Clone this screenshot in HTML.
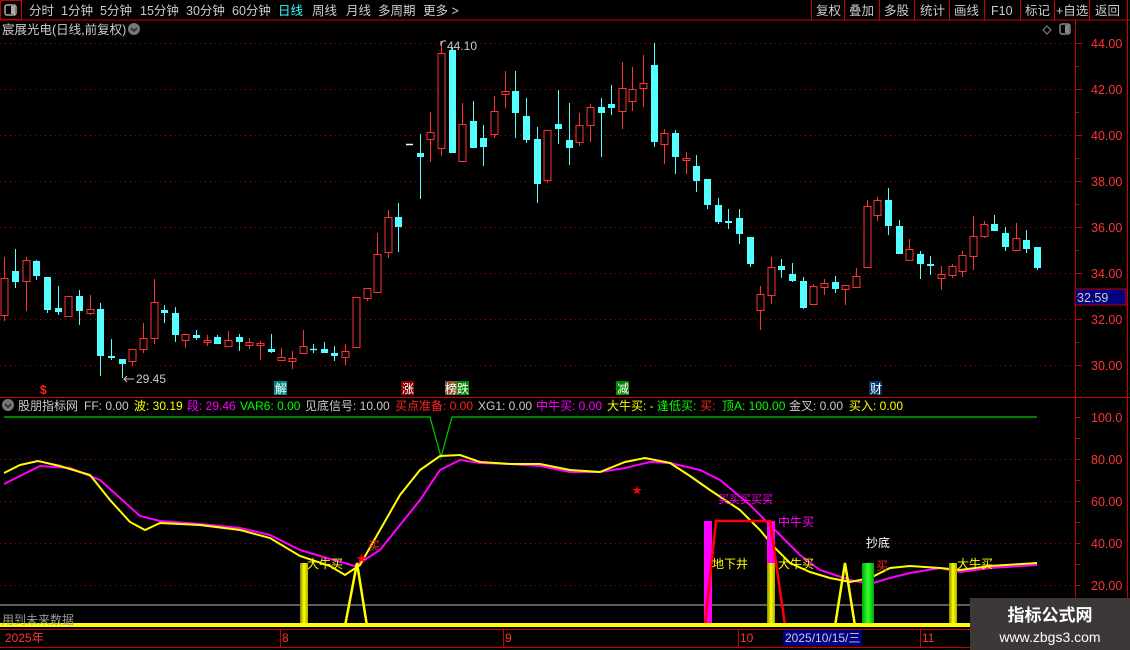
<!DOCTYPE html>
<html><head><meta charset="utf-8"><style>
body{margin:0;background:#000;width:1130px;height:650px;overflow:hidden;font-family:"Liberation Sans","Noto Sans CJK SC",sans-serif;}
svg{position:absolute;left:0;top:0}
text{font-family:"Liberation Sans","Noto Sans CJK SC",sans-serif;}
</style></head><body>
<svg id="s" width="1130" height="650" xmlns="http://www.w3.org/2000/svg">
<defs><linearGradient id="yg" x1="0" x2="1" y1="0" y2="0"><stop offset="0" stop-color="#880"/><stop offset="0.5" stop-color="#ff0"/><stop offset="1" stop-color="#aa0"/></linearGradient>
<linearGradient id="gg" x1="0" x2="1" y1="0" y2="0"><stop offset="0" stop-color="#0a0"/><stop offset="0.5" stop-color="#3f3"/><stop offset="1" stop-color="#0a0"/></linearGradient></defs>
<!-- toolbar -->
<rect x="0.5" y="0.5" width="21" height="19" fill="none" stroke="#c00"/>
<rect x="5" y="5" width="11" height="10" rx="2" fill="none" stroke="#aaa" stroke-width="1.5"/>
<rect x="11" y="6" width="4" height="8" fill="#aaa"/>
<line x1="0" y1="20" x2="1130" y2="20" stroke="#c00"/>
<g font-size="12.5" fill="#ccc">
<text x="29" y="15">分时</text><text x="61" y="15">1分钟</text><text x="100" y="15">5分钟</text><text x="140" y="15">15分钟</text><text x="186" y="15">30分钟</text><text x="232" y="15">60分钟</text><text x="278" y="15" fill="#3ff">日线</text><text x="312" y="15">周线</text><text x="346" y="15">月线</text><text x="378" y="15">多周期</text><text x="423" y="15">更多 &gt;</text>
<text x="816" y="15">复权</text><text x="849" y="15">叠加</text><text x="884" y="15">多股</text><text x="920" y="15">统计</text><text x="954" y="15">画线</text><text x="991" y="15">F10</text><text x="1025" y="15">标记</text><text x="1056" y="15">+自选</text><text x="1095" y="15">返回</text>
</g>
<g stroke="#c00"><line x1="811.5" y1="0" x2="811.5" y2="20"/><line x1="844.5" y1="0" x2="844.5" y2="20"/><line x1="879.5" y1="0" x2="879.5" y2="20"/><line x1="914.5" y1="0" x2="914.5" y2="20"/><line x1="949.5" y1="0" x2="949.5" y2="20"/><line x1="984.5" y1="0" x2="984.5" y2="20"/><line x1="1020.5" y1="0" x2="1020.5" y2="20"/><line x1="1054.5" y1="0" x2="1054.5" y2="20"/><line x1="1089.5" y1="0" x2="1089.5" y2="20"/><line x1="1127.5" y1="0" x2="1127.5" y2="650"/></g>
<text x="2" y="34" font-size="12.5" fill="#ccc">宸展光电(日线,前复权)</text>
<circle cx="134" cy="29" r="6" fill="#777"/><path d="M131 28l3 3 3-3" stroke="#222" fill="none" stroke-width="1.5"/>
<path d="M1047 26l4 4-4 4-4-4z" fill="none" stroke="#888"/>
<rect x="1060" y="24" width="10" height="10" rx="2" fill="none" stroke="#888" stroke-width="1.5"/><rect x="1065" y="25" width="4" height="8" fill="#888"/>
<!-- axes -->
<line x1="1075.5" y1="20" x2="1075.5" y2="650" stroke="#c00"/>
<line x1="0" y1="397.5" x2="1130" y2="397.5" stroke="#c00"/>
<line x1="0" y1="629.5" x2="1075" y2="629.5" stroke="#c00"/>
<line x1="0" y1="647.5" x2="1075" y2="647.5" stroke="#c00"/>
<g id="grid" stroke="#a00" stroke-dasharray="1,4"></g>
<g font-size="12.5" fill="#f33">
<text x="1091" y="48">44.00</text><text x="1091" y="94">42.00</text><text x="1091" y="140">40.00</text><text x="1091" y="186">38.00</text><text x="1091" y="232">36.00</text><text x="1091" y="278">34.00</text><text x="1091" y="324">32.00</text><text x="1091" y="370">30.00</text>
<text x="1091" y="422">100.0</text><text x="1091" y="464">80.00</text><text x="1091" y="506">60.00</text><text x="1091" y="548">40.00</text><text x="1091" y="590">20.00</text>
</g>
<rect x="1075" y="289" width="51" height="16" fill="#000080" stroke="#c00"/>
<text x="1077" y="302" font-size="12.5" fill="#ccc">32.59</text>
<g id="ticks" stroke="#c00"></g>
<g id="candles"></g>
<text x="447" y="50" font-size="12" fill="#ccc">44.10</text><path d="M441 44l2-3h3" stroke="#ccc" fill="none"/><line x1="441" y1="41" x2="441" y2="46" stroke="#ccc"/>
<text x="136" y="383" font-size="12" fill="#ccc">29.45</text><path d="M134 379h-10m3-3l-3 3 3 3" stroke="#ccc" fill="none"/>
<!-- markers -->
<text x="40" y="394" font-size="12" fill="#f22" font-weight="bold">$</text>
<rect x="274" y="381" width="13" height="14" fill="#088"/><text x="275" y="393" font-size="12" fill="#fff">解</text>
<rect x="401" y="381" width="13" height="14" fill="#800"/><text x="402" y="393" font-size="12" fill="#fff">涨</text>
<rect x="445" y="381" width="12" height="14" fill="#853"/><text x="445" y="393" font-size="12" fill="#fff">榜</text>
<rect x="457" y="381" width="12" height="14" fill="#080"/><text x="457" y="393" font-size="12" fill="#fff">跌</text>
<rect x="616" y="381" width="13" height="14" fill="#080"/><text x="617" y="393" font-size="12" fill="#fff">减</text>
<rect x="869" y="381" width="13" height="14" fill="#036"/><text x="870" y="393" font-size="12" fill="#fff">财</text>
<!-- legend -->
<circle cx="8" cy="405" r="6" fill="#777"/><path d="M5 404l3 3 3-3" stroke="#222" fill="none" stroke-width="1.5"/>
<g font-size="12">
<text x="18" y="410" fill="#ccc">股朋指标网</text><text x="84" y="410" fill="#ccc">FF: 0.00</text>
<text x="134" y="410" fill="#ff0">波: 30.19</text><text x="187" y="410" fill="#f0f">段: 29.46</text>
<text x="240" y="410" fill="#0f0">VAR6: 0.00</text><text x="305" y="410" fill="#ccc">见底信号: 10.00</text>
<text x="395" y="410" fill="#f22">买点准备: 0.00</text><text x="478" y="410" fill="#ccc">XG1: 0.00</text>
<text x="536" y="410" fill="#f0f">中牛买: 0.00</text><text x="607" y="410" fill="#ff0">大牛买: -</text>
<text x="657" y="410" fill="#0f0">逢低买:</text><text x="700" y="410" fill="#f22">买:</text>
<text x="722" y="410" fill="#0f0">顶A: 100.00</text><text x="789" y="410" fill="#ccc">金叉: 0.00</text>
<text x="849" y="410" fill="#ff0">买入: 0.00</text>
</g>
<!-- indicator -->
<polyline points="4,417 430,417 441,457 452,417 1037,417" fill="none" stroke="#0c0" stroke-width="1.2"/>
<line x1="0" y1="605" x2="1072" y2="605" stroke="#bbb"/>
<polyline fill="none" stroke="#f0f" stroke-width="2" points="4,484 20,476 40,466 70,468 100,480 120,498 140,516 160,521 200,524 240,528 270,535 300,550 330,559 355,566 380,550 400,525 420,500 440,470 460,460 480,463 510,464 540,466 570,472 600,472 625,468 650,462 670,463 700,470 720,480 750,505 780,535 800,555 820,570 850,580 870,584 890,578 910,573 940,568 960,572 990,568 1037,565"/>
<polyline fill="none" stroke="#ff0" stroke-width="2" points="4,473 20,465 38,461 60,466 90,475 110,500 130,522 145,530 160,523 200,525 240,530 270,538 300,556 330,566 345,575 360,565 380,530 400,495 420,470 440,456 460,455 480,462 510,464 540,464 570,470 600,472 625,462 645,458 670,463 690,476 710,490 740,510 760,530 775,548 790,563 810,572 830,578 850,582 870,578 890,568 910,566 940,568 960,570 990,566 1037,563"/>
<rect x="704" y="521" width="8" height="104" fill="#f0f"/>
<rect x="767" y="521" width="8" height="42" fill="#f0f"/>
<polyline points="705,625 716,521 770,521 785,625" fill="none" stroke="#f00" stroke-width="2.5"/>
<rect x="300" y="563" width="8" height="62" fill="url(#yg)"/>
<rect x="767" y="563" width="8" height="62" fill="url(#yg)"/>
<rect x="949" y="563" width="8" height="62" fill="url(#yg)"/>
<rect x="862" y="563" width="12" height="62" fill="url(#gg)"/>
<polyline points="345,626 357,563 367,626" fill="none" stroke="#ff0" stroke-width="2.5"/>
<polyline points="835,626 845,563 855,626" fill="none" stroke="#ff0" stroke-width="2.5"/>
<rect x="0" y="623" width="1072" height="4" fill="#ff0"/>
<g font-size="12">
<text x="307" y="568" fill="#ff0">大牛买</text><text x="778" y="568" fill="#ff0">大牛买</text><text x="957" y="568" fill="#ff0">大牛买</text>
<text x="712" y="568" fill="#ff0">地下井</text><text x="778" y="526" fill="#f0f">中牛买</text>
<text x="866" y="547" fill="#fff">抄底</text><text x="718" y="503" fill="#f0f" font-size="11">买买买买买</text>
<text x="368" y="550" fill="#f22">买</text><text x="876" y="570" fill="#f22">买</text>
<text x="2" y="624" fill="#999">用到未来数据</text>
</g>
<text x="356" y="562" font-size="11" fill="#f00">★</text>
<text x="632" y="494" font-size="10" fill="#f00">★</text>
<!-- date axis -->
<g font-size="12" fill="#f33"><text x="5" y="642">2025年</text><text x="282" y="642">8</text><text x="505" y="642">9</text><text x="740" y="642">10</text><text x="922" y="642">11</text></g>
<g stroke="#c00"><line x1="280.5" y1="629" x2="280.5" y2="647"/><line x1="503.5" y1="629" x2="503.5" y2="647"/><line x1="738.5" y1="629" x2="738.5" y2="647"/><line x1="920.5" y1="629" x2="920.5" y2="647"/></g>
<rect x="783" y="630" width="79" height="16" fill="#000080"/>
<text x="785" y="642" font-size="12" fill="#ccc">2025/10/15/三</text>
<rect x="970" y="598" width="160" height="52" fill="#3c3838"/>
<text x="1050" y="621" font-size="17" fill="#fff" font-weight="bold" text-anchor="middle">指标公式网</text>
<text x="1050" y="642" font-size="14" fill="#fff" text-anchor="middle">www.zbgs3.com</text>
</svg>
<script>
var NS="http://www.w3.org/2000/svg";
function el(p,t,a){var e=document.createElementNS(NS,t);for(var k in a)e.setAttribute(k,a[k]);p.appendChild(e);return e;}
var g=document.getElementById('grid');
[43,89,135,181,227,273,319,365,459,501,543,585].forEach(function(y){el(g,'line',{x1:0,y1:y+.5,x2:1075,y2:y+.5});});
var tk=document.getElementById('ticks');
for(var y=43;y<=365;y+=23){el(tk,'line',{x1:1075,y1:y+.5,x2:(y-43)%46==0?1082:1079,y2:y+.5});}
for(var y=417;y<=627;y+=21){el(tk,'line',{x1:1075,y1:y+.5,x2:1080,y2:y+.5});}
var C=[[4,278,315,257,321,'r'],[15,271,282,249,288,'c'],[26,260,281,257,311,'r'],[36,261,276,260,280,'c'],[47,277,310,277,313,'c'],[58,308,312,286,315,'c'],[68,296,316,296,316,'r'],[79,296,311,290,325,'c'],[90,309,313,295,315,'r'],[100,309,356,303,376,'c'],[111,356,358,339,360,'c'],[122,359,364,359,378,'c'],[132,349,361,349,366,'r'],[143,338,349,323,353,'r'],[154,302,338,279,344,'r'],[164,310,313,305,323,'c'],[175,313,335,307,342,'c'],[185,334,340,334,348,'r'],[196,335,338,330,340,'c'],[207,340,342,335,346,'r'],[217,337,344,335,344,'c'],[228,340,346,331,346,'r'],[239,337,342,334,351,'c'],[249,342,345,338,349,'r'],[260,343,345,341,360,'r'],[271,349,352,334,353,'c'],[281,357,360,348,360,'r'],[292,358,361,351,369,'r'],[303,346,353,330,353,'r'],[313,349,350,344,353,'c'],[324,349,353,342,353,'c'],[334,353,356,346,361,'c'],[345,351,357,344,365,'r'],[356,297,347,297,347,'r'],
[367,288,298,288,301,'r'],[377,254,292,233,292,'r'],[388,217,252,210,258,'r'],[398,217,227,203,252,'c'],[409,144,145,144,145,'w'],[420,153,157,134,199,'c'],[430,132,139,112,162,'r'],[441,53,148,43,156,'r'],[452,50,153,48,153,'c'],[462,124,161,103,162,'r'],[473,121,148,101,148,'c'],[483,138,147,125,166,'c'],[494,111,134,96,138,'r'],[505,91,94,71,108,'r'],[515,91,113,71,138,'c'],[526,116,140,98,143,'c'],[537,139,184,127,203,'c'],[547,130,180,130,183,'r'],[558,124,129,90,144,'c'],[569,140,148,103,165,'c'],[579,125,142,113,146,'r'],[590,107,125,104,142,'r'],[601,107,113,98,157,'c'],[611,104,108,85,115,'c'],[622,88,111,62,129,'r'],[632,89,101,67,111,'r'],[643,83,88,55,107,'r'],[654,65,142,43,147,'c'],[664,133,144,129,164,'r'],[675,133,157,130,174,'c'],[686,158,160,152,174,'r'],[696,166,181,155,192,'c'],
[707,179,205,179,209,'c'],[718,205,222,198,224,'c'],[728,221,223,209,229,'c'],[739,218,234,209,244,'c'],[750,237,264,237,267,'c'],[760,294,310,286,330,'r'],[771,267,295,257,304,'r'],[781,266,270,259,278,'c'],[792,274,281,263,282,'c'],[803,281,308,277,309,'c'],[813,286,304,284,304,'r'],[824,283,287,279,295,'r'],[835,282,289,276,293,'c'],[845,285,289,285,305,'r'],[856,276,287,268,287,'r'],[867,206,267,200,267,'r'],[877,200,215,197,221,'r'],[888,200,226,188,235,'c'],[899,226,254,220,254,'c'],[909,249,260,239,261,'r'],[920,254,264,251,279,'c'],[930,264,266,256,275,'c'],[941,274,278,266,290,'r'],[952,266,275,264,278,'r'],[962,255,271,251,277,'r'],[973,236,256,216,270,'r'],[984,224,236,221,238,'r'],[994,224,231,215,231,'c'],[1005,233,247,227,251,'c'],[1016,238,250,223,251,'r'],[1026,240,249,230,253,'c'],[1037,247,268,247,270,'c']];
var cg=document.getElementById('candles');
C.forEach(function(d){var x=d[0],t=d[1],b=d[2],h=d[3],l=d[4],c=d[5];
var col=c=='r'?'#ff3232':(c=='c'?'#54ffff':'#fff');
if(h<t)el(cg,'line',{x1:x+.5,y1:h,x2:x+.5,y2:t,stroke:col});
if(l>b)el(cg,'line',{x1:x+.5,y1:b,x2:x+.5,y2:l,stroke:col});
if(b-t<=1){el(cg,'line',{x1:x-3,y1:t+.5,x2:x+4,y2:t+.5,stroke:col,'stroke-width':1.5});}
else if(c=='r'){el(cg,'rect',{x:x-3,y:t+.5,width:7,height:b-t,fill:'#000',stroke:col});}
else el(cg,'rect',{x:x-3,y:t,width:7,height:b-t,fill:col});
});
</script>
</body></html>
